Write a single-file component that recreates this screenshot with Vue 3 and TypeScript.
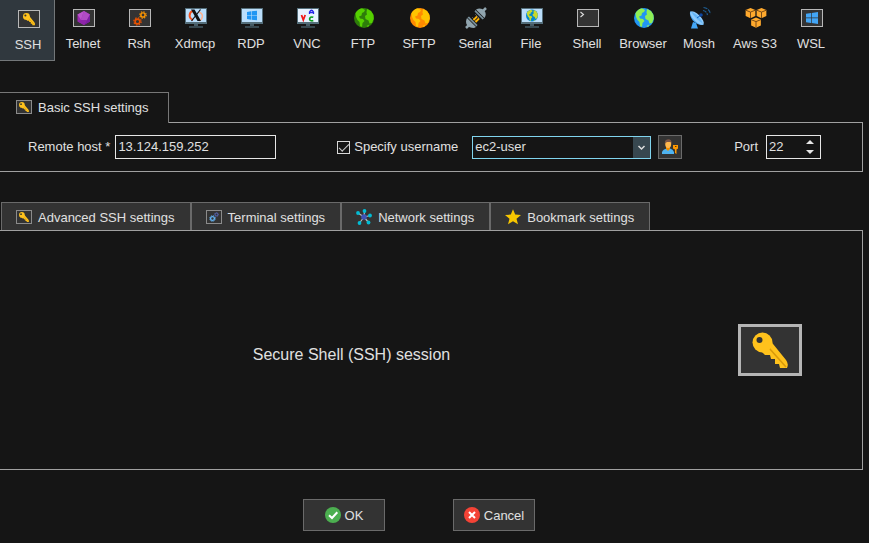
<script setup lang="ts">
import { ref } from 'vue'

interface Session {
  id: string
  label: string
}

interface SettingsTab {
  id: string
  label: string
}

const sessions: Session[] = [
  { id: 'ssh', label: 'SSH' },
  { id: 'telnet', label: 'Telnet' },
  { id: 'rsh', label: 'Rsh' },
  { id: 'xdmcp', label: 'Xdmcp' },
  { id: 'rdp', label: 'RDP' },
  { id: 'vnc', label: 'VNC' },
  { id: 'ftp', label: 'FTP' },
  { id: 'sftp', label: 'SFTP' },
  { id: 'serial', label: 'Serial' },
  { id: 'file', label: 'File' },
  { id: 'shell', label: 'Shell' },
  { id: 'browser', label: 'Browser' },
  { id: 'mosh', label: 'Mosh' },
  { id: 'aws', label: 'Aws S3' },
  { id: 'wsl', label: 'WSL' },
]

const tabs: SettingsTab[] = [
  { id: 'small-key', label: 'Advanced SSH settings' },
  { id: 'small-gears', label: 'Terminal settings' },
  { id: 'network', label: 'Network settings' },
  { id: 'star', label: 'Bookmark settings' },
]

const activeSession = ref('ssh')
const host = ref('13.124.159.252')
const useName = ref(true)
const userName = ref('ec2-user')
const port = ref(22)

function stepPort(delta: number): void {
  port.value = Math.min(65535, Math.max(1, port.value + delta))
}
</script>

<template>
  <svg class="sprite" aria-hidden="true">
    <symbol id="key" viewBox="0 0 64 52">
      <path d="M31 15 L48 36 Q51 40 49 44 L42 44 L41 40 L37 40 L37 35 L33 35 L32 31 L27 31 L20 24 Z" fill="#ffc21c" />
      <path d="M31 24 L48 43" stroke="#d99a0b" stroke-width="1.6" />
      <circle cx="24.500" cy="18.500" r="10" fill="#ffc21c" />
      <circle cx="21.500" cy="16" r="3" fill="#333" />
    </symbol>
    <symbol id="frame" viewBox="0 0 24 24">
      <rect x="1.500" y="3.500" width="21" height="17" fill="#333" stroke="#b8b8b8" />
    </symbol>
    <symbol id="windows" viewBox="0 0 12 12">
      <path d="M0 1.700 L5 1 V5.600 H0Z M5.700 0.900 L12 0 V5.600 H5.700Z M0 6.300 H5 V11 L0 10.300Z M5.700 6.300 H12 V12 L5.700 11.100Z" />
    </symbol>
    <symbol id="monitor" viewBox="0 0 24 24">
      <rect x="1" y="2" width="22" height="16" fill="#546e7a" />
      <rect x="2" y="3" width="20" height="13" fill="#bbdefb" />
      <rect x="10" y="18" width="4" height="2" fill="#455a64" />
      <rect x="5" y="20" width="14" height="2" fill="#37474f" />
    </symbol>
    <symbol id="land" viewBox="0 0 20 20">
      <path d="M1.500 5 Q4 1 8 0.300 L11 2 L10 4 L8 5 L7.500 7.500 L5 8.500 L6 10.500 L9 11 L10.500 13 L8.500 15 L8 19 L6 18 L5.500 14 L3.500 12 L2 9Z M13 1 L17 3 L19.500 7 L19.700 11 L18 15 L15.500 15.500 L14.500 12.500 L11.500 11 L11 8 L13 6.500 L12.500 4.500Z M12.500 18 L15.500 16.500 L14 19Z" />
    </symbol>
    <symbol id="gear" viewBox="0 0 12 12">
      <circle cx="6" cy="6" r="3.200" fill="none" stroke="currentColor" stroke-width="2.200" />
      <circle cx="6" cy="6" r="4.900" fill="none" stroke="currentColor" stroke-width="1.600" stroke-dasharray="2 1.850" />
    </symbol>
    <symbol id="cube" viewBox="0 0 12 12">
      <path d="M6 0.500 L11.300 2.700 V9.200 L6 11.700 L0.700 9.200 V2.700Z" fill="#ffa92d" />
      <path d="M0.700 2.900 L6 5 L11.300 2.900 M6 5 V11.500" fill="none" stroke="#6d4315" stroke-width="1" />
    </symbol>

    <symbol id="ssh" viewBox="0 0 24 24">
      <use href="#frame" />
      <use href="#key" x="1" y="3" width="22" height="18" />
    </symbol>
    <symbol id="telnet" viewBox="0 0 24 24">
      <use href="#frame" />
      <path d="M12 5 L18 8.500 V15.500 L12 19 L5.500 15.500 V8.500Z" fill="#9c27b0" />
      <path d="M12 5 L5.500 8.500 L9 14Z" fill="#ba55cb" />
      <path d="M12 5 L18 8.500 L15 14 H9Z" fill="#b04cc4" />
      <path d="M18 8.500 V15.500 L12 19 L15 14Z" fill="#7b1fa2" />
      <path d="M5.500 15.500 L9 14 H15 L12 19Z" fill="#8e24aa" />
    </symbol>
    <symbol id="rsh" viewBox="0 0 24 24">
      <use href="#frame" />
      <use href="#gear" x="5" y="11" width="9" height="9" color="#e65100" />
      <use href="#gear" x="11" y="5" width="8" height="8" color="#ff9800" />
    </symbol>
    <symbol id="xdmcp" viewBox="0 0 24 24">
      <use href="#monitor" />
      <path d="M9 5 C5 6 4 12 9 14" fill="none" stroke="#f4511e" stroke-width="2" />
      <path d="M15 6 C20 8 19 13 15 15" fill="none" stroke="#ffb28f" stroke-width="1.500" />
      <path d="M7 3.500 H10.500 L17 15 H13.500Z" fill="#111" />
      <path d="M16.500 3.500 L7.500 15" stroke="#111" stroke-width="1.200" />
    </symbol>
    <symbol id="rdp" viewBox="0 0 24 24">
      <use href="#monitor" />
      <use href="#windows" x="7" y="4.500" width="10" height="10" fill="#2196f3" />
    </symbol>
    <symbol id="vnc" viewBox="0 0 24 24">
      <use href="#monitor" />
      <rect x="2" y="3" width="20" height="13" fill="#e6f2ff" />
      <path d="M5.500 9 L7.300 14 L9.200 9" fill="none" stroke="#f01818" stroke-width="1.800" />
      <path d="M13.500 8 V6 Q15.500 2.500 17.500 6 V8 M13.500 6.500 H17.500" fill="none" stroke="#2525e8" stroke-width="1.300" />
      <path d="M17.300 11.300 C14 10 12.500 13.500 14.500 14.500 Q16 15.200 17.300 14.500" fill="none" stroke="#0a9d1c" stroke-width="1.600" />
    </symbol>
    <symbol id="ftp" viewBox="0 0 24 24">
      <circle cx="12" cy="12" r="10" fill="#2e7d0a" />
      <use href="#land" x="2" y="2" width="20" height="20" fill="#55d000" />
    </symbol>
    <symbol id="sftp" viewBox="0 0 24 24">
      <circle cx="12" cy="12" r="10" fill="#ff8a00" />
      <use href="#land" x="2" y="2" width="20" height="20" fill="#ffc400" />
    </symbol>
    <symbol id="serial" viewBox="0 0 24 24">
      <path d="M2 22 L6 18 M18 6 L22 2" stroke="#90a4ae" stroke-width="2.500" />
      <path d="M8 11 L12.500 15.500 M11 8 L15.500 12.500" stroke="#555" stroke-width="1" />
      <path d="M9.500 14 L13 10.500 M11.500 16 L15 12.500" stroke="#ffb300" stroke-width="1.800" />
      <path d="M3 12 L12 21 L10 22 Q5 22 3 19 Q1 16 3 12Z" fill="#90a4ae" />
      <path d="M3.500 11.500 L5 10.500 L13.500 19 L12.500 20.500Z" fill="#78909c" />
      <path d="M12 3.500 L20.500 12 Q23 8 20.500 5 Q17 1 12 3.500Z" fill="#90a4ae" />
      <path d="M11.500 4 L10.500 5.500 L18.500 13.500 L20 12.500Z" fill="#78909c" />
    </symbol>
    <symbol id="file" viewBox="0 0 24 24">
      <use href="#monitor" />
      <circle cx="12" cy="9.500" r="6" fill="#0288d1" />
      <use href="#land" x="6" y="3.500" width="12" height="12" fill="#c6d92f" />
    </symbol>
    <symbol id="shell" viewBox="0 0 24 24">
      <use href="#frame" />
      <path d="M4.500 6 L7.500 8.500 L4.500 11" fill="none" stroke="#ddd" stroke-width="1.100" />
    </symbol>
    <symbol id="browser" viewBox="0 0 24 24">
      <circle cx="12" cy="12" r="10" fill="#2196f3" />
      <use href="#land" x="2" y="2" width="20" height="20" fill="#8eef55" />
    </symbol>
    <symbol id="mosh" viewBox="0 0 24 24">
      <path d="M5 16 L3 22.500 H10 L8 17Z" fill="#42a5f5" />
      <path d="M2 5 C1 12 7 20 16 19 Z" fill="#42a5f5" />
      <ellipse cx="9" cy="12" rx="3.500" ry="9" transform="rotate(-45 9 12)" fill="#90caf9" />
      <path d="M3 5.500 C7 7 13 12 15 18 C11 15 6 11 3 5.500Z" fill="#64b5f6" />
      <path d="M9 12 L13 9" stroke="#1565c0" stroke-width="1" />
      <circle cx="13" cy="9" r="1.800" fill="#0d47a1" />
      <path d="M15 4.500 Q18.500 5 19.500 9 M15.500 1.500 Q21 2 22.500 8" fill="none" stroke="#1e5f96" stroke-width="1.200" stroke-dasharray="4 1" />
    </symbol>
    <symbol id="aws" viewBox="0 0 24 24">
      <use href="#cube" x="1" y="1.500" width="11" height="11" />
      <use href="#cube" x="12" y="1.500" width="11" height="11" />
      <use href="#cube" x="6.500" y="11" width="11" height="11" />
    </symbol>
    <symbol id="wsl" viewBox="0 0 24 24">
      <use href="#frame" />
      <use href="#windows" x="6" y="6" width="12" height="12" fill="#42a5f5" />
    </symbol>

    <symbol id="small-frame" viewBox="0 0 16 16">
      <rect x="0.500" y="1.500" width="15" height="13" fill="#333" stroke="#8b8b8b" />
    </symbol>
    <symbol id="small-key" viewBox="0 0 16 16">
      <use href="#small-frame" />
      <use href="#key" x="-1" y="0.500" width="18" height="15" />
    </symbol>
    <symbol id="small-gears" viewBox="0 0 16 16">
      <use href="#small-frame" />
      <use href="#gear" x="3" y="6" width="7" height="7" color="#64b5f6" />
      <use href="#gear" x="8" y="3" width="5" height="5" color="#5c6bc0" />
    </symbol>
    <symbol id="network" viewBox="0 0 16 16">
      <path d="M8 8 L2 4 M8 8 L8.500 2 M8 8 L14.500 6.500 M8 8 L3.500 14 M8 8 L12.500 13.500" stroke="#b0bec5" stroke-width="1.200" />
      <circle cx="8" cy="8" r="2.800" fill="#3f51b5" />
      <g fill="#00bcd4">
        <circle cx="2" cy="4" r="1.900" />
        <circle cx="8.500" cy="2" r="1.900" />
        <circle cx="14" cy="6.500" r="1.900" />
        <circle cx="3.500" cy="14" r="1.900" />
        <circle cx="12.500" cy="13.500" r="1.900" />
      </g>
    </symbol>
    <symbol id="star" viewBox="0 0 16 16">
      <path d="M8 0.300 L10.200 5.600 L16 6 L11.500 9.700 L13 15.300 L8 12.200 L3 15.300 L4.500 9.700 L0 6 L5.800 5.600Z" fill="#f7c600" />
    </symbol>
  </svg>

  <main class="dialog">
    <nav class="toolbar" aria-label="Session type">
      <button
        v-for="s in sessions"
        :key="s.id"
        type="button"
        class="session"
        :class="{ active: s.id === activeSession }"
        @click="activeSession = s.id"
      >
        <svg class="session-icon" aria-hidden="true"><use :href="'#' + s.id" /></svg>
        <span>{{ s.label }}</span>
      </button>
    </nav>

    <section class="basic">
      <h2 class="basic-tab">
        <svg class="tab-icon" aria-hidden="true"><use href="#small-key" /></svg>
        <span>Basic SSH settings</span>
      </h2>
      <form class="fields" @submit.prevent>
        <div class="field">
          <label for="host">Remote host *</label>
          <input id="host" v-model="host" class="text-box host" type="text" />
        </div>
        <div class="field user">
          <input id="use-name" v-model="useName" class="tick" type="checkbox" />
          <label for="use-name">Specify username</label>
          <div class="combo">
            <select v-model="userName" aria-label="Username">
              <option>ec2-user</option>
            </select>
            <svg class="combo-arrow" viewBox="0 0 17 21" aria-hidden="true">
              <path d="M5.500 9 L8.500 12 L11.500 9" fill="none" stroke="#ddd" stroke-width="1.500" />
            </svg>
          </div>
          <button type="button" class="users" aria-label="Manage users">
            <svg viewBox="0 0 18 18" aria-hidden="true">
              <path d="M1 16 V14 Q2 11 6 10.500 H9 Q12 11 13 14 V16Z" fill="#4fb3f0" />
              <path d="M5 9 H9 V11 L7 13 L5 11Z" fill="#f08c00" />
              <ellipse cx="7.200" cy="6" rx="3" ry="4" fill="#ffb74d" />
              <path d="M3.800 6 Q3.500 1.500 7 1.200 Q11 1 10.700 6 L9.500 4 H6 L4.500 5Z" fill="#795548" />
              <path d="M12 7 H17 V10.500 L15.500 11.500 V16 L14 15 V11.500 L12 10.500Z" fill="#ff9800" />
              <rect x="14" y="8" width="1.500" height="1" fill="#5d3b00" />
            </svg>
          </button>
        </div>
        <div class="field">
          <label for="port">Port</label>
          <div class="spin text-box">
            <input id="port" v-model.number="port" type="number" min="1" max="65535" />
            <div class="steps">
              <button type="button" aria-label="Increase port" @click="stepPort(1)">
                <svg viewBox="0 0 8 4" aria-hidden="true"><path d="M0 4 L4 0 L8 4Z" fill="#e6e6e6" /></svg>
              </button>
              <button type="button" aria-label="Decrease port" @click="stepPort(-1)">
                <svg viewBox="0 0 8 4" aria-hidden="true"><path d="M0 0 L4 4 L8 0Z" fill="#e6e6e6" /></svg>
              </button>
            </div>
          </div>
        </div>
      </form>
    </section>

    <section class="more">
      <div class="tabs">
        <button v-for="t in tabs" :key="t.id" type="button" class="tab">
          <svg class="tab-icon" aria-hidden="true"><use :href="'#' + t.id" /></svg>
          <span>{{ t.label }}</span>
        </button>
      </div>
      <div class="panel">
        <p class="caption">Secure Shell (SSH) session</p>
        <svg class="big-key" viewBox="0 0 64 52" aria-hidden="true">
          <rect x="1.500" y="1.500" width="61" height="49" fill="#333" stroke="#b5b5b5" stroke-width="3" />
          <use href="#key" width="64" height="52" />
        </svg>
      </div>
    </section>

    <footer class="actions">
      <button type="button" class="action">
        <svg viewBox="0 0 16 16" aria-hidden="true">
          <circle cx="8" cy="8" r="8" fill="#4caf50" />
          <path d="M4 8.200 L7 11 L12.300 5.300" fill="none" stroke="#fff" stroke-width="2" />
        </svg>
        <span>OK</span>
      </button>
      <button type="button" class="action">
        <svg viewBox="0 0 16 16" aria-hidden="true">
          <circle cx="8" cy="8" r="8" fill="#f44336" />
          <path d="M5 5 L11 11 M11 5 L5 11" stroke="#fff" stroke-width="2" />
        </svg>
        <span>Cancel</span>
      </button>
    </footer>
  </main>
</template>

<style>
body {
  margin: 0;
  background: #151515;
}
</style>

<style scoped>
.sprite {
  position: absolute;
  width: 0;
  height: 0;
}

.dialog {
  box-sizing: border-box;
  display: flex;
  flex-direction: column;
  min-height: 100vh;
  background: #151515;
  color: #e0e0e0;
  font: 13px/16px "Liberation Sans", Arial, sans-serif;
}

.dialog * {
  box-sizing: border-box;
}

button,
input,
select {
  margin: 0;
  padding: 0;
  border: 0;
  border-radius: 0;
  background: none;
  color: inherit;
  font: inherit;
}

svg {
  display: block;
  flex: none;
}

.toolbar {
  display: flex;
  height: 61px;
}

.session {
  display: flex;
  flex: 0 1 56px;
  flex-direction: column;
  align-items: center;
  gap: 6px;
  padding-top: 6px;
  white-space: nowrap;
}

.session.active {
  flex-basis: 55px;
  padding: 7px 0 0 2px;
  border-right: 1px solid #737779;
  border-bottom: 1px solid #737779;
  background: #30383e;
}

.session-icon {
  width: 24px;
  height: 24px;
  margin-left: 2px;
}

.basic {
  margin: 31px 6px 0 0;
}

.basic-tab {
  position: relative;
  display: flex;
  align-items: center;
  gap: 6px;
  width: fit-content;
  height: 31px;
  margin: 0 0 -1px;
  padding: 0 19px 2px 16px;
  border: solid #777;
  border-width: 1px 1px 0 0;
  background: #151515;
  font: inherit;
}

.tab-icon {
  width: 16px;
  height: 16px;
}

.basic-tab span,
.tab span,
.action span {
  padding-top: 2px;
}

.fields {
  display: flex;
  align-items: center;
  justify-content: space-between;
  height: 50px;
  padding: 0 41px 0 28px;
  border: solid #a0a0a0;
  border-width: 1px 1px 1px 0;
}

.field {
  display: flex;
  align-items: center;
  gap: 5px;
  white-space: nowrap;
}

.text-box {
  height: 24px;
  border: 1px solid #e6e6e6;
}

.host {
  width: 161px;
  padding: 0 2px 2px;
}

.user {
  gap: 4px;
  margin-left: 9px;
}

.tick {
  display: grid;
  width: 13px;
  height: 13px;
  border: 1px solid #d8d8d8;
  appearance: none;
}

.tick:checked::before {
  content: "";
  width: 9px;
  height: 4px;
  margin: 2px 0 0 1px;
  border: solid #ccc;
  border-width: 0 0 1px 1px;
  transform: rotate(-45deg);
}

.combo {
  display: grid;
  grid-template-columns: 1fr 17px;
  width: 179px;
  height: 23px;
  margin-left: 10px;
  border: 1px solid #80d4ee;
}

.combo select {
  grid-area: 1 / 1 / 2 / 3;
  padding: 0 2px;
  appearance: none;
}

.combo-arrow {
  grid-area: 1 / 2;
  width: 17px;
  height: 21px;
  background: #37474f;
  pointer-events: none;
}

.users {
  display: grid;
  place-items: center;
  width: 24px;
  height: 24px;
  margin-left: 3px;
  border: 1px solid #6a6a6a;
  background: #333;
}

.users svg {
  width: 18px;
  height: 18px;
}

.field:last-child {
  gap: 8px;
}

.spin {
  display: flex;
  width: 55px;
}

.spin input {
  flex: 1;
  min-width: 0;
  padding-left: 2px;
  appearance: textfield;
}

.steps {
  display: flex;
  flex-direction: column;
  justify-content: center;
  gap: 6px;
  padding-right: 6px;
}

.steps svg {
  width: 8px;
  height: 4px;
}

.more {
  display: flex;
  flex: 1;
  flex-direction: column;
  margin: 30px 6px 0 0;
}

.tabs {
  display: flex;
  padding-left: 1px;
}

.tab {
  display: flex;
  align-items: center;
  gap: 6px;
  height: 28px;
  padding: 1px 15px 0 14px;
  border: solid #6a6a6a;
  border-width: 1px 1px 0;
  background: #333;
  white-space: nowrap;
}

.panel {
  display: flex;
  flex: 1;
  align-items: center;
  padding-right: 60px;
  border: solid #a0a0a0;
  border-width: 1px 1px 1px 0;
}

.caption {
  flex: 1;
  margin: 0;
  padding: 10px 35px 0 0;
  font-size: 16px;
  line-height: 20px;
  text-align: center;
}

.big-key {
  width: 64px;
  height: 52px;
}

.actions {
  display: flex;
  justify-content: center;
  gap: 68px;
  padding: 29px 31px 12px 0;
}

.action {
  display: flex;
  align-items: center;
  justify-content: center;
  gap: 4px;
  width: 82px;
  height: 32px;
  border: 1px solid #6a6a6a;
  background: #333;
}

.action svg {
  width: 16px;
  height: 16px;
}
</style>
